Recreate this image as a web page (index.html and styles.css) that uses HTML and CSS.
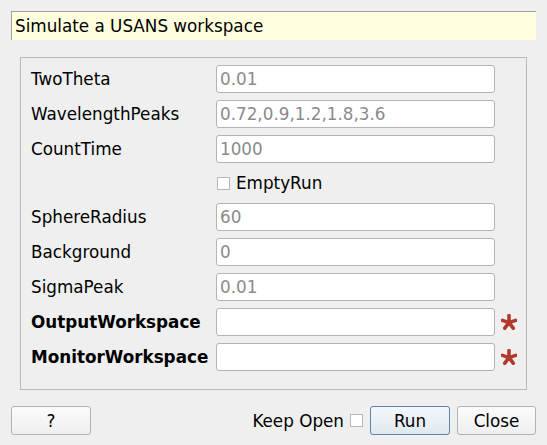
FILE: index.html
```html
<!DOCTYPE html>
<html>
<head>
<meta charset="utf-8">
<link rel="stylesheet" href="styles.css">
</head>
<body>
<div class="dialog">
  <div class="summary">Simulate a USANS workspace</div>
  <div class="group">
    <div class="grid">
      <div class="label">TwoTheta</div>
      <div class="field"><span class="ph">0.01</span></div>
      <div class="req"></div>

      <div class="label">WavelengthPeaks</div>
      <div class="field"><span class="ph">0.72,0.9,1.2,1.8,3.6</span></div>
      <div class="req"></div>

      <div class="label">CountTime</div>
      <div class="field"><span class="ph">1000</span></div>
      <div class="req"></div>

      <div class="label"></div>
      <div class="checkrow"><span class="cbox"></span><span>EmptyRun</span></div>
      <div class="req"></div>

      <div class="label">SphereRadius</div>
      <div class="field"><span class="ph">60</span></div>
      <div class="req"></div>

      <div class="label">Background</div>
      <div class="field"><span class="ph">0</span></div>
      <div class="req"></div>

      <div class="label">SigmaPeak</div>
      <div class="field"><span class="ph">0.01</span></div>
      <div class="req"></div>

      <div class="label bold">OutputWorkspace</div>
      <div class="field"></div>
      <div class="req"><svg class="star" viewBox="0 0 16 16" width="16" height="16"><g stroke="#b23a2c" stroke-width="3.6" stroke-linecap="round"><line x1="8" y1="8.6" x2="8" y2="1.6"/><line x1="8" y1="8.6" x2="14.6" y2="6.4"/><line x1="8" y1="8.6" x2="12.2" y2="14.2"/><line x1="8" y1="8.6" x2="3.8" y2="14.2"/><line x1="8" y1="8.6" x2="1.4" y2="6.4"/></g></svg></div>

      <div class="label bold">MonitorWorkspace</div>
      <div class="field"></div>
      <div class="req"><svg class="star" viewBox="0 0 16 16" width="16" height="16"><g stroke="#b23a2c" stroke-width="3.6" stroke-linecap="round"><line x1="8" y1="8.6" x2="8" y2="1.6"/><line x1="8" y1="8.6" x2="14.6" y2="6.4"/><line x1="8" y1="8.6" x2="12.2" y2="14.2"/><line x1="8" y1="8.6" x2="3.8" y2="14.2"/><line x1="8" y1="8.6" x2="1.4" y2="6.4"/></g></svg></div>
    </div>
  </div>
  <div class="buttons">
    <div class="btn help">?</div>
    <div class="spacer"></div>
    <div class="keep">Keep Open <span class="cbox"></span></div>
    <div class="btn run">Run</div>
    <div class="btn close">Close</div>
  </div>
</div>
</body>
</html>
```

FILE: styles.css
```css
html, body {
  margin: 0;
  padding: 0;
  background: #efefef;
}
body {
  font-family: "DejaVu Sans", sans-serif;
  font-size: 16.8px;
  color: #000;
  width: 547px;
  height: 445px;
  overflow: hidden;
}
.dialog {
  padding: 11px 11px 0 11px;
  display: flex;
  flex-direction: column;
}
.summary {
  height: 29px;
  box-sizing: border-box;
  background: #ffffdd;
  border-top: 1px solid #a0a0a0;
  border-left: 1px solid #a0a0a0;
  padding-left: 3px;
  display: flex;
  align-items: center;
  line-height: 1;
}
.group {
  margin: 17px 9px 0 9px;
  border: 1px solid #b9b9b9;
  height: 333px;
  box-sizing: border-box;
  padding: 7px 0 0 10px;
}
.grid {
  display: grid;
  grid-template-columns: 185px 279px 22px;
  grid-template-rows: 28px 28px 28px 26px 28px 28px 28px 28px 28px;
  row-gap: 7px;
  align-items: center;
}
.label {
  line-height: 1;
  padding-top: 1px;
}
.bold {
  font-weight: bold;
}
.field {
  height: 28px;
  box-sizing: border-box;
  background: #fff;
  border: 1px solid #b4b4b4;
  border-radius: 3px;
  padding-left: 3px;
  display: flex;
  align-items: center;
}
.ph {
  color: #8a8a8a;
}
.checkrow {
  display: flex;
  align-items: center;
  gap: 6px;
  padding-left: 1px;
}
.cbox {
  display: inline-block;
  width: 13px;
  height: 13px;
  box-sizing: border-box;
  border: 1px solid #b8b8b8;
  background: #fff;
}
.req {
  display: flex;
  align-items: center;
  padding-left: 6px;
}
.star {
  display: block;
}
.buttons {
  margin-top: 16px;
  display: flex;
  align-items: center;
}
.spacer {
  flex: 1;
}
.btn {
  height: 29px;
  box-sizing: border-box;
  border: 1px solid #b2b2b2;
  border-radius: 3px;
  background: linear-gradient(#fbfbfb, #efefef);
  display: flex;
  align-items: center;
  justify-content: center;
}
.help {
  width: 80px;
}
.keep {
  display: flex;
  align-items: center;
  gap: 6px;
  margin-right: 7px;
}
.run {
  width: 80px;
  border-color: #5a86ae;
  background: linear-gradient(#f4f7fa, #dfe8f0);
  margin-right: 7px;
}
.close {
  width: 79px;
}
```
